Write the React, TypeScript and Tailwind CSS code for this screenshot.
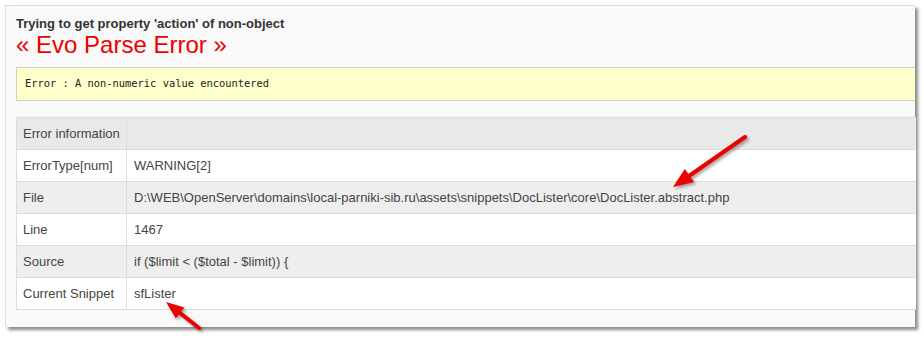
import React from 'react';

const ROWS = [
  { label: 'ErrorType[num]', value: 'WARNING[2]' },
  { label: 'File', value: 'D:\\WEB\\OpenServer\\domains\\local-parniki-sib.ru\\assets\\snippets\\DocLister\\core\\DocLister.abstract.php' },
  { label: 'Line', value: '1467' },
  { label: 'Source', value: 'if ($limit < ($total - $limit)) {' },
  { label: 'Current Snippet', value: 'sfLister' }
];

function Arrows() {
  return (
    <svg className="absolute left-0 top-0 pointer-events-none drop-shadow-[2px_2px_1.5px_rgba(0,0,0,0.35)]" width="924" height="338" viewBox="0 0 924 338">
      {/* arrow to the file path */}
      <line x1="745" y1="137" x2="689" y2="176" stroke="#ec0000" strokeWidth="4" strokeLinecap="round" />
      <polygon points="673,187 694,182 684.8,169" fill="#ec0000" />
      {/* arrow to the snippet name */}
      <line x1="199" y1="328" x2="180" y2="313" stroke="#ec0000" strokeWidth="4" strokeLinecap="round" />
      <polygon points="166,302 184.4,307.6 175.8,318.6" fill="#ec0000" />
    </svg>
  );
}

export default function App() {
  return (
    <div className="relative w-[924px] h-[338px] bg-white overflow-hidden font-['Liberation_Sans',Arial,sans-serif]">
      <div className="absolute left-[5px] top-[5px] w-[910px] h-[322px] bg-[#f9f9f9] border-l border-t border-[#dedede] shadow-[3px_3px_3px_rgba(0,0,0,0.45)]">
        <div className="pl-[10px] pt-[10px]">
          <div className="text-[13px] leading-[15px] font-bold text-[#333]">Trying to get property 'action' of non-object</div>
          <div className="text-[24px] leading-[28px] text-[#ee0000]">« Evo Parse Error »</div>

          {/* message box */}
          <div className="mt-[8px] h-[34px] bg-[#ffffcc] border border-[#cfcfcf] border-r-0 flex items-center pl-[8px] font-['DejaVu_Sans_Mono',monospace] text-[10.4px] text-[#222]">
            Error : A non-numeric value encountered
          </div>

          {/* info table */}
          <table className="mt-[16px] w-[900px] border-collapse text-[13px] text-[#444]">
            <tbody>
              <tr className="h-[32px] bg-[#e9e9e9]">
                <td className="w-[110px] pl-[6px] border border-[#dcdcdc]">Error information</td>
                <td className="border border-[#dcdcdc] border-r-0"></td>
              </tr>
              {ROWS.map((row, i) => (
                <tr key={i} className={i % 2 === 1 ? 'h-[32px] bg-[#eeeeee]' : 'h-[32px] bg-white'}>
                  <td className="w-[110px] pl-[6px] border border-[#dcdcdc] whitespace-nowrap">{row.label}</td>
                  <td className="pl-[7px] border border-[#dcdcdc] border-r-0 whitespace-nowrap">{row.value}</td>
                </tr>
              ))}
            </tbody>
          </table>
        </div>
      </div>
      <Arrows />
    </div>
  );
}
